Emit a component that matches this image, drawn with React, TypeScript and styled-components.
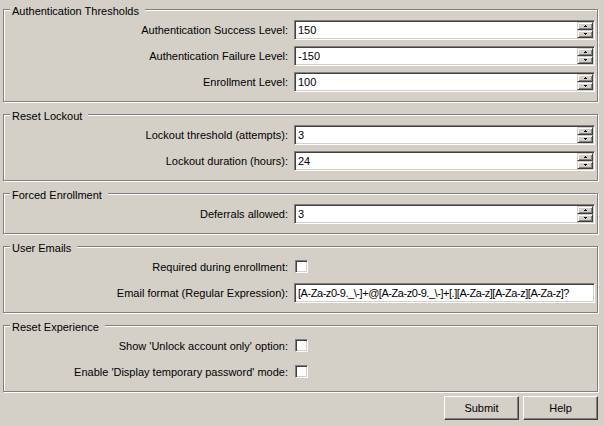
import styled, { createGlobalStyle } from "styled-components";

const GlobalStyle = createGlobalStyle`
  html, body {
    margin: 0;
    padding: 0;
    background: #d4d0c8;
  }
  body {
    font-family: "Liberation Sans", Arial, sans-serif;
    font-size: 11px;
    color: #000;
  }
`;

const Page = styled.div`
  width: 604px;
  height: 426px;
  box-sizing: border-box;
  padding: 0 6px 0 3px;
  display: flex;
  flex-direction: column;
  gap: 3px;
`;

const Group = styled.fieldset`
  margin: 0;
  padding: 1px 2px 9px 0;
  min-width: 0;
  border: 1px solid #808080;
  box-shadow: inset 1px 1px 0 #fff, 1px 1px 0 #fff;
`;

const Legend = styled.legend`
  margin-left: 6px;
  padding: 5px 6px 1px 2px;
  line-height: 13px;
  background: #d4d0c8;
`;

const Rows = styled.div`
  display: flex;
  flex-direction: column;
  gap: 6px;
`;

const Row = styled.div`
  display: grid;
  grid-template-columns: 1fr 301px;
  column-gap: 6px;
  align-items: center;
  height: 20px;
`;

const Label = styled.label`
  text-align: right;
  white-space: nowrap;
  line-height: 13px;
`;

const Field = styled.div`
  height: 20px;
  box-sizing: border-box;
  display: flex;
  align-items: stretch;
  padding: 1px;
  background: #fff;
  border: 1px solid;
  border-color: #808080 #fff #fff #808080;
  box-shadow: inset 1px 1px 0 #404040, inset -1px -1px 0 #d4d0c8;
`;

const TextInput = styled.input<{ $tight?: boolean }>`
  flex: 1;
  min-width: 0;
  border: none;
  outline: none;
  background: transparent;
  padding: 0 0 0 2px;
  margin: 0;
  font: inherit;
  color: #000;
  letter-spacing: ${(p) => (p.$tight ? "-0.45px" : "normal")};
`;

const Spin = styled.div`
  display: flex;
  flex-direction: column;
  width: 16px;
`;

const SpinButton = styled.div`
  flex: 1;
  display: flex;
  align-items: center;
  justify-content: center;
  box-sizing: border-box;
  background: #d4d0c8;
  border: 1px solid;
  border-color: #d4d0c8 #404040 #404040 #d4d0c8;
  box-shadow: inset 1px 1px 0 #fff, inset -1px -1px 0 #808080;
`;

const Check = styled.input`
  appearance: none;
  margin: 0 0 0 1px;
  width: 13px;
  height: 13px;
  box-sizing: border-box;
  background: #fff;
  border: 1px solid;
  border-color: #808080 #fff #fff #808080;
  box-shadow: inset 1px 1px 0 #404040, inset -1px -1px 0 #d4d0c8;
`;

const ButtonBar = styled.div`
  display: flex;
  justify-content: flex-end;
  gap: 4px;
  margin-top: 1px;
`;

const Button = styled.button`
  width: 75px;
  height: 24px;
  box-sizing: border-box;
  margin: 0;
  padding: 0;
  font: inherit;
  color: #000;
  background: #d4d0c8;
  border: 1px solid;
  border-color: #fff #404040 #404040 #fff;
  box-shadow: inset -1px -1px 0 #808080;
`;

function Arrow({ down }: { down?: boolean }) {
  return (
    <svg width="3" height="2" viewBox="0 0 3 2" shapeRendering="crispEdges">
      <rect x={1} y={down ? 1 : 0} width={1} height={1} fill="#000" />
      <rect x={0} y={down ? 0 : 1} width={3} height={1} fill="#000" />
    </svg>
  );
}

function Spinner({ label, value }: { label: string; value: string }) {
  return (
    <Row>
      <Label>{label}</Label>
      <Field>
        <TextInput readOnly value={value} />
        <Spin>
          <SpinButton>
            <Arrow />
          </SpinButton>
          <SpinButton>
            <Arrow down />
          </SpinButton>
        </Spin>
      </Field>
    </Row>
  );
}

function CheckRow({ label }: { label: string }) {
  return (
    <Row>
      <Label>{label}</Label>
      <div>
        <Check type="checkbox" />
      </div>
    </Row>
  );
}

export default function App() {
  return (
    <>
      <GlobalStyle />
      <Page>
        <Group>
          <Legend>Authentication Thresholds</Legend>
          <Rows>
            <Spinner label="Authentication Success Level:" value="150" />
            <Spinner label="Authentication Failure Level:" value="-150" />
            <Spinner label="Enrollment Level:" value="100" />
          </Rows>
        </Group>

        <Group>
          <Legend>Reset Lockout</Legend>
          <Rows>
            <Spinner label="Lockout threshold (attempts):" value="3" />
            <Spinner label="Lockout duration (hours):" value="24" />
          </Rows>
        </Group>

        <Group>
          <Legend>Forced Enrollment</Legend>
          <Rows>
            <Spinner label="Deferrals allowed:" value="3" />
          </Rows>
        </Group>

        <Group>
          <Legend>User Emails</Legend>
          <Rows>
            <CheckRow label="Required during enrollment:" />
            <Row>
              <Label>Email format (Regular Expression):</Label>
              <Field>
                <TextInput
                  $tight
                  readOnly
                  value="[A-Za-z0-9._\-]+@[A-Za-z0-9._\-]+[.][A-Za-z][A-Za-z][A-Za-z]?"
                />
              </Field>
            </Row>
          </Rows>
        </Group>

        <Group>
          <Legend>Reset Experience</Legend>
          <Rows>
            <CheckRow label="Show 'Unlock account only' option:" />
            <CheckRow label="Enable 'Display temporary password' mode:" />
          </Rows>
        </Group>

        <ButtonBar>
          <Button>Submit</Button>
          <Button>Help</Button>
        </ButtonBar>
      </Page>
    </>
  );
}
